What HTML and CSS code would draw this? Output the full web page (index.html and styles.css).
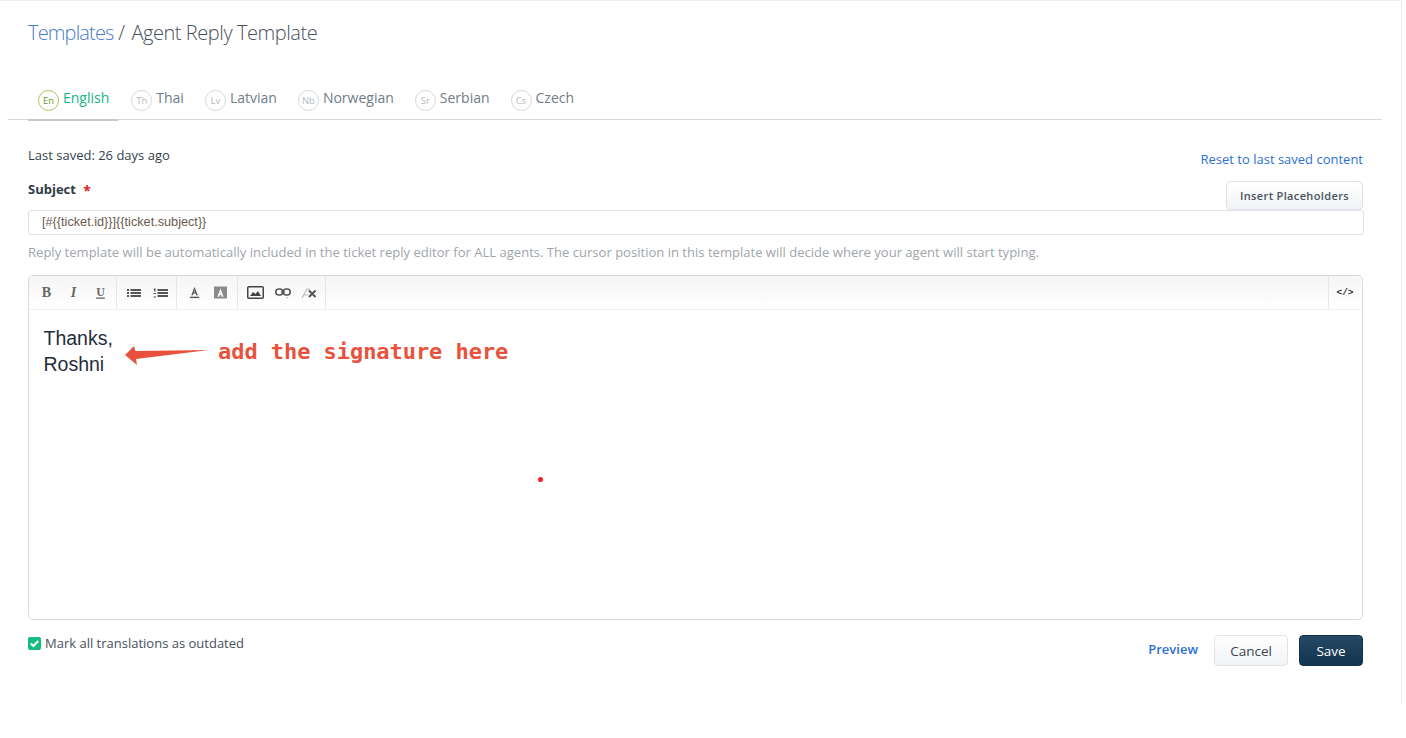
FILE: index.html
```html
<!DOCTYPE html>
<html lang="en">
<head>
<meta charset="utf-8">
<title>Agent Reply Template</title>
<link rel="stylesheet" href="styles.css">
</head>
<body>
<div class="page">
  <h1 class="title"><a class="crumb">Templates</a> <span class="sep">/</span> Agent Reply Template</h1>
  <nav class="tabs">
    <a class="tab active"><span class="badge">En</span><span>English</span></a>
    <a class="tab"><span class="badge">Th</span><span>Thai</span></a>
    <a class="tab"><span class="badge">Lv</span><span>Latvian</span></a>
    <a class="tab"><span class="badge">Nb</span><span>Norwegian</span></a>
    <a class="tab"><span class="badge">Sr</span><span>Serbian</span></a>
    <a class="tab"><span class="badge">Cs</span><span>Czech</span></a>
  </nav>
  <main class="content">
    <div class="meta-row">
      <span class="saved">Last saved: 26 days ago</span>
      <a class="reset">Reset to last saved content</a>
    </div>
    <div class="subject-row">
      <label class="subject-label">Subject <span class="req">*</span></label>
      <button class="insert-btn">Insert Placeholders</button>
    </div>
    <div class="subject-input">[#{{ticket.id}}]{{ticket.subject}}</div>
    <p class="hint">Reply template will be automatically included in the ticket reply editor for ALL agents. The cursor position in this template will decide where your agent will start typing.</p>
    <section class="editor">
      <div class="toolbar">
        <div class="tool-group g1">
          <svg class="ico" viewBox="0 0 12 12"><text x="6" y="10.5" class="g-serif" text-anchor="middle">B</text></svg>
          <svg class="ico" viewBox="0 0 12 12"><text x="6" y="10.5" class="g-serif g-it" text-anchor="middle">I</text></svg>
          <svg class="ico" viewBox="0 0 12 12"><text x="6" y="9" class="g-serif g-sm" text-anchor="middle">U</text><rect x="2" y="10.6" width="8" height="1.2" fill="#666"/></svg>
        </div>
        <div class="tool-group g2">
          <svg class="ico wide" viewBox="0 0 15 12"><path d="M1 2h2v2H1zM1 5h2v2H1zM1 8h2v2H1zM4.500 2H15v2H4.500zM4.500 5H15v2H4.500zM4.500 8H15v2H4.500z" fill="#555"/></svg>
          <svg class="ico wide" viewBox="0 0 15 12"><path d="M1 1.500h1.500v3H1zM.5 6h2.500v1H.5zM.5 9.500h2.500v1H.5zM4.500 2H15v2H4.500zM4.500 5H15v2H4.500zM4.500 8H15v2H4.500z" fill="#555"/></svg>
        </div>
        <div class="tool-group g3">
          <svg class="ico" viewBox="0 0 14 14"><path d="M7 1 3.500 10h1.700l.7-2h2.200l.7 2h1.700L7 1zm-.6 5.600L7 4.500l.6 2.100H6.400z" fill="#555"/><rect x="2" y="11.500" width="10" height="1.500" fill="#555"/></svg>
          <svg class="ico" viewBox="0 0 15 14"><path fill-rule="evenodd" d="M0 0h15v14H0zM7.500 2 4 12h2l.7-2h1.600l.7 2h2L7.500 2zM7.100 8l.4-2 .4 2z" fill="#8a8a8a"/></svg>
        </div>
        <div class="tool-group g4">
          <svg class="ico img" viewBox="0 0 17 13"><rect x=".75" y=".75" width="15.500" height="11.500" rx="1" fill="none" stroke="#444" stroke-width="1.500"/><path d="M3 10 6 6l2.500 2L11 5l3 5z" fill="#444"/></svg>
          <svg class="ico link" viewBox="0 0 16 13"><rect x=".8" y="3" width="7" height="6" rx="3" fill="none" stroke="#555" stroke-width="1.600"/><rect x="8.200" y="3" width="7" height="6" rx="3" fill="none" stroke="#555" stroke-width="1.600"/><path d="M6 6h4" stroke="#555" stroke-width="1.300"/><path d="M11 11.500h2l-1 1z" fill="#777"/></svg>
          <svg class="ico clear" viewBox="0 0 16 12"><path d="M1 11 6 2h2l.5 3M3.500 8H7" fill="none" stroke="#bbb" stroke-width="1.200"/><path d="M8 3.500l6.500 6.500M14.500 3.500 8 10" stroke="#555" stroke-width="2"/></svg>
        </div>
        <div class="tool-code">&lt;/&gt;</div>
      </div>
      <div class="editor-body">
        <p>Thanks,</p>
        <p>Roshni</p>
      </div>
      <svg class="arrow" viewBox="0 0 84 20"><path d="M0 10 9 1l1.500 5L84 5 11 14l1 6z" fill="#e8523d"/></svg>
      <span class="note">add the signature here</span>
      <span class="dot"></span>
    </section>
    <footer class="actions">
      <label class="mark">
        <span class="check"><svg viewBox="0 0 13 13"><path d="M2.800 6.600 5.400 9l4.800-5" fill="none" stroke="#fff" stroke-width="2"/></svg></span>
        Mark all translations as outdated
      </label>
      <div class="buttons">
        <a class="preview">Preview</a>
        <button class="btn cancel">Cancel</button>
        <button class="btn save">Save</button>
      </div>
    </footer>
  </main>
</div>
</body>
</html>
```
FILE: styles.css
```css
* { box-sizing: border-box; }
html, body { margin: 0; padding: 0; background: #fff; }
body { font-family: "Open Sans", "Noto Sans", sans-serif; color: #333f4d; height: 738px; overflow: hidden; }
.page { width: 1402px; height: 705px; border-top: 1px solid #ebeff3; border-right: 1px solid #ebeff3; }
.title { margin: 0; padding: 17px 28px 0; height: 70px; font-size: 20px; line-height: 30px; font-weight: 300; color: #47505c; letter-spacing: -.44px; }
.crumb { color: #4a7bc8; letter-spacing: -.85px; }
.sep { margin-right: 2px; }
.tabs { display: flex; gap: 2px; margin: 0 19px 0 8px; padding-left: 20px; height: 49px; border-bottom: 1px solid #d5d8dc; }
.tab { display: flex; align-items: flex-start; gap: 4px; height: 50px; padding: 17px 9px 0 10px; font-size: 14px; line-height: 20px; color: #6f7c87; }
.tab.active { color: #16b67f; border-bottom: 2px solid #c5c8cc; margin-right: 1px; }
.badge { width: 21px; height: 21px; margin-top: 2px; border: 1px solid #d4d7da; border-radius: 50%; font-size: 9.500px; line-height: 20px; text-align: center; color: #b5b9bd; flex: none; }
.active .badge { border-color: #a5c85a; color: #6f9a2c; }
.content { padding: 0 38px 0 28px; }
.meta-row { display: flex; justify-content: space-between; padding-top: 26px; height: 61px; }
.saved { font-size: 13px; line-height: 18px; color: #333f4d; }
.reset { font-size: 13px; line-height: 18px; margin-top: 4px; color: #2c6fd1; }
.subject-row { display: flex; justify-content: space-between; align-items: flex-end; height: 29px; }
.subject-label { align-self: flex-start; margin-top: -1px; font-size: 13px; line-height: 18px; font-weight: 700; color: #2f3a45; }
.req { color: #e02020; margin-left: 4px; font-size: 14px; line-height: 14px; position: relative; top: 2px; }
.insert-btn { width: 137px; height: 29px; padding: 0; border: 1px solid #dfe3e7; border-radius: 4px; background: linear-gradient(#fff, #f1f3f6); font-family: inherit; font-size: 11px; font-weight: 600; letter-spacing: .36px; color: #4a525c; }
.subject-input { width: 1336px; height: 25px; border: 1px solid #dfe3e7; border-radius: 3px; padding: 0 13px; font-family: "Liberation Sans", Arial, sans-serif; font-size: 12.700px; line-height: 23px; color: #6b5a4e; }
.hint { margin: 7px 0 0; height: 33px; font-size: 13.050px; line-height: 21px; color: #a0a5ab; white-space: nowrap; }
.editor { position: relative; width: 1335px; height: 345px; border: 1px solid #d5d8dc; border-radius: 5px; }
.toolbar { display: flex; height: 34px; margin-right: 1px; border-bottom: 1px solid #eeeff1; background: linear-gradient(#f5f5f5, #fff); border-radius: 5px 5px 0 0; }
.tool-group { display: flex; align-items: center; height: 100%; border-right: 1px solid #e6e7e9; }
.g1 { width: 88px; padding-left: 11px; gap: 14px; }
.g2 { width: 60px; padding-left: 9px; gap: 12px; }
.g3 { width: 61px; padding-left: 11px; gap: 13px; }
.g4 { width: 88px; padding-left: 9px; gap: 11px; }
.ico { width: 13px; height: 13px; flex: none; overflow: visible; }
.ico.wide { width: 15px; height: 12px; }
.ico.img { width: 17px; height: 13px; }
.ico.link { width: 16px; height: 13px; }
.ico.clear { width: 16px; height: 12px; margin-left: -1px; }
.g-serif { font-family: "Liberation Serif", serif; font-size: 13px; font-weight: 700; fill: #666; }
.g-it { font-style: italic; }
.g-sm { font-size: 11px; }
.tool-code { margin-left: auto; width: 33px; border-left: 1px solid #e6e7e9; text-align: center; font-family: "Liberation Mono", monospace; font-weight: 700; font-size: 9.500px; line-height: 34px; color: #333; }
.editor-body { padding: 15px 15px 15px 14.500px; font-family: "Liberation Sans", Arial, sans-serif; font-size: 19.500px; line-height: 26px; color: #1f2d3d; }
.editor-body p { margin: 0; }
.arrow { position: absolute; left: 96px; top: 69px; width: 84px; height: 20px; }
.note { position: absolute; left: 189px; top: 61px; font-family: "DejaVu Sans Mono", monospace; font-weight: 700; font-size: 22px; letter-spacing: -.05px; line-height: 30px; color: #e8523d; white-space: nowrap; }
.dot { position: absolute; left: 509px; top: 201px; width: 5px; height: 5px; border-radius: 50%; background: #f0202a; }
.actions { display: flex; justify-content: space-between; width: 1335px; padding-top: 14px; }
.mark { display: flex; align-items: center; gap: 4px; height: 18px; font-size: 13px; line-height: 18px; color: #47505c; }
.check { width: 13px; height: 13px; border-radius: 2px; background: #13bd80; display: block; }
.check svg { display: block; width: 13px; height: 13px; }
.buttons { display: flex; align-items: center; height: 31px; margin-top: 1px; }
.preview { font-size: 13px; font-weight: 600; color: #2c6fd1; margin-right: 16px; margin-top: -4px; }
.btn { height: 31px; border-radius: 4px; font-family: inherit; font-size: 13.500px; font-weight: 500; padding: 0; }
.cancel { width: 74px; border: 1px solid #dfe3e7; background: linear-gradient(#fff, #f1f3f6); color: #3a4550; margin-right: 11px; }
.save { width: 64px; border: 1px solid #12344d; background: linear-gradient(#264966, #12344d); color: #fff; }
```
